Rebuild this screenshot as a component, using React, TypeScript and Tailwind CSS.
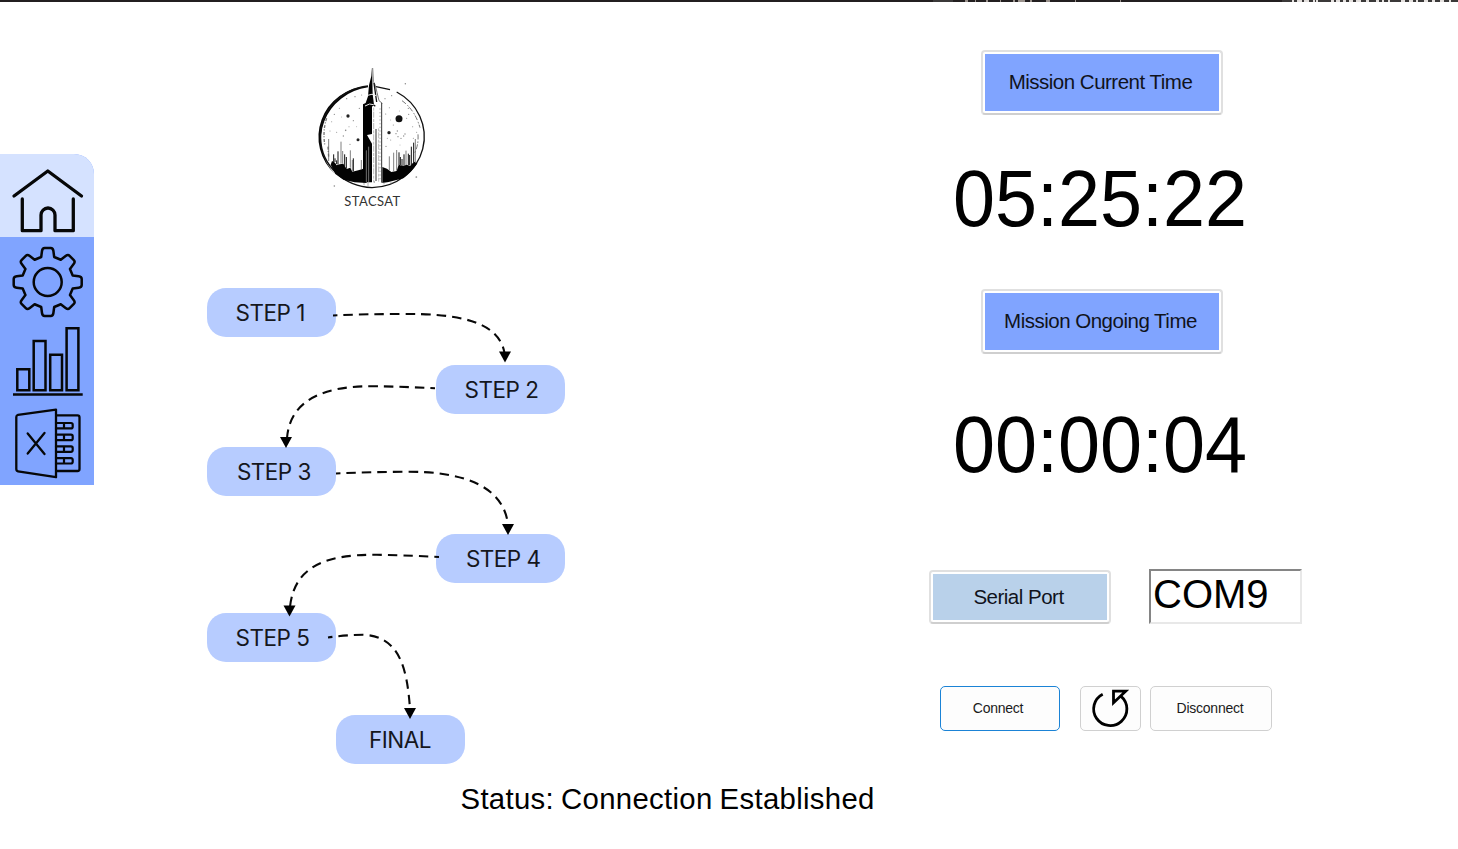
import type { ReactNode } from "react";

const toothPath = Array.from({ length: 8 }, (_, k) => {
  const a = (k * Math.PI) / 4;
  const p = (x: number, y: number) =>
    `${(47.7 + x * Math.cos(a) - y * Math.sin(a)).toFixed(2)} ${(45 + x * Math.sin(a) + y * Math.cos(a)).toFixed(2)}`;
  return `${k === 0 ? "M" : "L"}${p(-6.5, -25)} L${p(-5.7, -31)} Q${p(-5.3, -34)} ${p(-3, -34)} L${p(3, -34)} Q${p(5.3, -34)} ${p(5.7, -31)} L${p(6.5, -25)}`;
}).join(" ") + " Z";

function NavIcon({ children }: { children: ReactNode }) {
  return (
    <svg width="94" height="83" viewBox="0 0 94 83" fill="none" stroke="#060708" strokeWidth="2.5" strokeLinecap="round" strokeLinejoin="round" className="block">
      {children}
    </svg>
  );
}

function Sidebar() {
  return (
    <nav className="mt-[152px] flex h-[331px] w-[94px] shrink-0 flex-col overflow-hidden rounded-tr-[20px] bg-[#80a4ff]">
      <button aria-label="Home" className="h-[83px] shrink-0 bg-[#d5e2ff]">
        <NavIcon>
          <path strokeWidth="3.3" d="M14 42 L47.8 17 L81.5 42 M22.3 45 V76.7 H41 V61 a7 7 0 0 1 14 0 V76.7 H73.3 V45" />
        </NavIcon>
      </button>
      <button aria-label="Settings" className="h-[82px] shrink-0">
        <NavIcon>
          <path d={toothPath} />
          <circle cx="47.7" cy="45" r="14" />
        </NavIcon>
      </button>
      <button aria-label="Charts" className="h-[83px] shrink-0">
        <NavIcon>
          <path strokeLinecap="butt" strokeLinejoin="miter" d="M17.3 50.3h12v21h-12z M33.7 22h11.8v49.3h-11.8z M50.2 35.7h11.8v35.6h-11.8z M66.6 9.3h11.8v62h-11.8z M13 75.6h69.7" />
        </NavIcon>
      </button>
      <button aria-label="Spreadsheet" className="h-[83px] shrink-0">
        <NavIcon>
          <path strokeWidth="2.3" d="M56 7.6 L18 12.8 Q16.3 13.2 16.3 15 V67 Q16.3 69 18 69.3 L56 75.2 Z M56 13.4 H77.5 Q79.5 13.4 79.5 15.4 V67 Q79.5 69 77.5 69 H56 M27.7 31.4 L44.5 52 M44.5 31 L27.7 51.6" />
          <path strokeWidth="2.2" d="M56 21h15a1.7 1.7 0 0 1 1.7 1.7v2a1.7 1.7 0 0 1-1.7 1.7h-15 M64 21v5.4 M56 32.7h15a1.7 1.7 0 0 1 1.7 1.7v2a1.7 1.7 0 0 1-1.7 1.7h-15 M64 32.7v5.4 M56 44.4h15a1.7 1.7 0 0 1 1.7 1.7v2a1.7 1.7 0 0 1-1.7 1.7h-15 M64 44.4v5.4 M56 56.1h15a1.7 1.7 0 0 1 1.7 1.7v2a1.7 1.7 0 0 1-1.7 1.7h-15 M64 56.1v5.4" />
        </NavIcon>
      </button>
    </nav>
  );
}

const specks = [
  [140, 131, 2], [165, 125, 2], [178, 160, 2], [118, 160, 1.6], [103, 178, 2], [160, 197, 1.8], [137, 226, 2.4],
  [130, 243, 2], [147, 215, 1.5], [95, 200, 1.5], [110, 232, 1.6], [150, 268, 1.8], [255, 131, 1.8], [275, 122, 1.8],
  [268, 158, 1.6], [257, 177, 1.8], [280, 210, 1.8], [292, 228, 2], [288, 236, 2], [294, 245, 2], [303, 250, 2],
  [311, 243, 2], [315, 237, 2], [325, 160, 2], [320, 190, 1.6], [338, 215, 1.6], [272, 255, 1.5], [258, 274, 2],
  [262, 250, 1.5], [316, 86, 2.2], [326, 178, 2], [350, 232, 1.6], [103, 393, 2.4], [349, 366, 2.6], [185, 120, 1.6],
  [90, 228, 1.5], [125, 186, 1.4], [340, 250, 1.6], [300, 270, 1.4], [170, 215, 1.4], [272, 195, 1.4], [298, 168, 1.4],
];

function Logo() {
  return (
    <figure className="absolute left-[206px] top-[53px] w-[145px]">
      <svg width="145" height="137" viewBox="0 0 435 411" className="block">
        <path d="M204 93 A158 153 0 0 0 106 358 A165 157 0 0 1 204 97 Z" fill="#050505" />
        <path d="M204 93 A160 153 0 0 0 216 398 A160 153 0 0 0 290 111 M270 104 L228 95" fill="none" stroke="#111" strokeWidth="4" />
        <path d="M80 190 Q68 225 74 268 M84 275 L86 306" fill="none" stroke="#777" strokeWidth="4" strokeDasharray="9 4 3 5" />
        <path d="M306 137 Q345 165 360 218 M354 238 Q356 270 344 294" fill="none" stroke="#777" strokeWidth="3" strokeDasharray="15 6 5 4" />
        <path d="M92 329 L96 318 L105 323 L110 331 L119 328 L130 326 L136 336 L140 342 L151 338 L157 350 L175 346 L190 341 L190 378 L200 378 L200 384 L164 382 L130 374 L106 357 Z" fill="#030303" />
        <path d="M247 336 L261 341 L274 351 L290 348 L296 329 L309 333 L320 329 L330 333 L342 320 L352 325 Q335 352 310 370 L266 381 L247 384 Z" fill="#030303" />
        <path d="M101 321V298 M105 321V310 M110 327V316 M114 329V289 M134 334V298 M139 341V306 M160 349V310 M297 330V292 M301 330V306 M306 333V312 M312 332V298 M325 331V296 M329 331V300 M334 330V275 M341 323V263" stroke="#111" strokeWidth="3" />
        <path d="M86 318V252 M123 326V260 M128 326V288 M151 338V286 M157 349V315 M184 343V315 M268 346V304 M281 348V293 M290 347V285 M318 330V287 M346 321V252" stroke="#666" strokeWidth="2.5" />
        <path d="M189 382 V148 L197 144 L204 124 L207 91 L214 63 L216 37 L218 118 L222 149 L216 155 V237 L201 240 L216 266 V382 Z" fill="#020202" />
        <path d="M218 39 L220 79 L226 91 L231 112 L237 137 L247 145" fill="none" stroke="#777" strokeWidth="3" />
        <path d="M222 84 L230 141 M218 148 L226 154" stroke="#111" strokeWidth="4" />
        <path d="M203 121 Q216 114 229 122 M195 153 Q209 143 221 149" fill="none" stroke="#eee" strokeWidth="3" />
        <path d="M245 144 V383 M228 222 V378" stroke="#333" strokeWidth="3" />
        <path d="M221 158 V382 M236 220 V380" stroke="#999" strokeWidth="2" strokeDasharray="9 3 18 4" />
        <path d="M240 160 V374" stroke="#aaa" strokeWidth="3" strokeDasharray="4 7" />
        <path d="M199 382V286 M206 382V275" stroke="#aaa" strokeWidth="2" />
        <path d="M192 384V391 M204 382V394 M223 378V384 M252 382V388 M273 381V387" stroke="#888" strokeWidth="2" />
        {specks.map(([x, y, r], i) => <circle key={i} cx={x} cy={y} r={r} fill="#888" />)}
        <circle cx="144" cy="183" r="5" fill="#222" />
        <circle cx="174" cy="254" r="4.5" fill="#222" />
        <circle cx="267" cy="233" r="5" fill="#222" />
        <circle cx="297" cy="191" r="10.5" fill="#111" />
      </svg>
      <figcaption className="-mt-px text-center font-['Lato'] text-[13px] leading-5 tracking-[0.4px] text-[#333]">STACSAT</figcaption>
    </figure>
  );
}

const nodes = [
  { label: "STEP 1", place: "left-[112.5px] top-[285.5px] pl-[29px]" },
  { label: "STEP 2", place: "left-[341.5px] top-[362.5px] pl-[29px]" },
  { label: "STEP 3", place: "left-[113.4px] top-[445px] pl-[29.5px]" },
  { label: "STEP 4", place: "left-[342.4px] top-[532px] pl-[29.5px]" },
  { label: "STEP 5", place: "left-[112.5px] top-[611px] pl-[29px]" },
  { label: "FINAL", place: "left-[242.4px] top-[712.5px] pl-[32.5px]" },
];

const links = [
  { d: "M333 315.5 Q365 314 400 314 C460 313 499 322 504.5 353", x: 505, y: 362.5, offset: 5 },
  { d: "M435 388.3 Q400 386.5 377 386.3 C320 385 290 402 287 438", x: 286, y: 448, offset: 5 },
  { d: "M336 473.5 Q370 472 405 471.7 C465 471 504 487 508 525", x: 508, y: 535, offset: 5 },
  { d: "M439 557 Q400 555 377 554.8 C320 554 294 570 290 607", x: 289.5, y: 616.5, offset: 5 },
  { d: "M328 637.5 Q345 635 363 634.8 C398 636 407 665 410 709", x: 410, y: 719, offset: 5 },
];

function FlowDiagram() {
  return (
    <section className="relative w-[836px] shrink-0">
      <Logo />
      {nodes.map((n) => (
        <div key={n.label} className={`absolute flex h-[49px] w-[129px] items-center whitespace-nowrap rounded-[19px] bg-[#b7ccff] pt-px font-['Inter'] text-[22.5px] tracking-[-0.5px] text-[#15171d] ${n.place}`}>
          {n.label}
        </div>
      ))}
      <svg className="absolute left-0 top-0" width="600" height="780" viewBox="94 2 600 780">
        {links.map((l) => (
          <g key={l.d}>
            <path d={l.d} fill="none" stroke="#080808" strokeWidth="2.1" strokeDasharray="9.5 6" strokeDashoffset={l.offset} />
            <path d={`M${l.x - 6} ${l.y - 11} h12 l-6 11 z`} fill="#000" />
          </g>
        ))}
      </svg>
    </section>
  );
}

function Caption({ children, className }: { children: ReactNode; className: string }) {
  return (
    <div className={`flex items-center justify-center whitespace-nowrap rounded-[4px] border-2 border-b-[#cfcfcf] border-[#e0e0e0] p-[2px] text-[20.5px] tracking-[-0.5px] text-[#10131c] ${className}`}>
      {children}
    </div>
  );
}

function Clock({ value, className }: { value: string; className: string }) {
  return (
    <time className={`ml-[23px] h-[87px] w-max origin-left scale-x-[0.944] whitespace-nowrap text-[80px] leading-[87px] text-black ${className}`}>
      {value}
    </time>
  );
}

function Controls() {
  return (
    <section className="flex w-[400px] shrink-0 flex-col pt-[48px]">
      <Caption className="ml-[50.5px] h-[65px] w-[242px]">
        <span className="flex size-full items-center justify-center bg-[#80a4ff] pr-[2px]">Mission Current Time</span>
      </Caption>
      <Clock value="05:25:22" className="mt-[40px]" />
      <Caption className="ml-[50.5px] mt-[47px] h-[65px] w-[242px]">
        <span className="flex size-full items-center justify-center bg-[#80a4ff] pr-[2px]">Mission Ongoing Time</span>
      </Caption>
      <Clock value="00:00:04" className="mt-[47px]" />
      <div className="mt-[81px] flex items-start">
        <Caption className="-ml-px h-[54px] w-[182px] mt-px">
          <span className="flex size-full items-center justify-center bg-[#b9d1ea] pr-[3px]">Serial Port</span>
        </Caption>
        <div className="ml-[38px] h-[55px] w-[153px] border-2 border-b-[#e8e8e8] border-l-[#858585] border-r-[#e8e8e8] border-t-[#858585] pl-[2px] text-[40px] leading-[47px] text-black">COM9</div>
      </div>
      <div className="ml-[10px] mt-[62px] flex text-[14px] tracking-[-0.25px] text-[#1b1b1b]">
        <button className="h-[45px] w-[120px] rounded-[5px] border border-[#1b83d6] bg-[#fdfdfd] pr-[4px]">Connect</button>
        <button aria-label="Refresh" className="ml-5 h-[45px] w-[61px] rounded-[5px] border border-[#d0d0d0] bg-[#fdfdfd]">
          <svg width="59" height="43" viewBox="1081.7 687 59 43" fill="none" stroke="#000" strokeWidth="2.8">
            <path d="M1103.4 694.2 A16.6 16.6 0 1 0 1121.8 696.4 M1114.2 691.2 H1126.4 L1114.2 702.8 Z" />
          </svg>
        </button>
        <button className="ml-[9px] h-[45px] w-[122px] rounded-[5px] border border-[#d0d0d0] bg-[#fdfdfd] pr-[2px]">Disconnect</button>
      </div>
    </section>
  );
}

export default function App() {
  return (
    <main className="flex h-[849px] w-[1458px] flex-col overflow-hidden bg-white font-['Liberation_Sans',sans-serif]">
      <header className="h-[2px] shrink-0 bg-[#231f20]">
        <svg width="1458" height="2" viewBox="0 0 1458 2" className="block">
          <path d="M933 1h20M1282 1h176" stroke="#3b3939" strokeWidth="2" />
          <path d="M965 1h3M975 1h1M986 1h2M1000 1h1M1013 1h2M1018 1h7M1030 1h2M1046 1h4M1075 1h1M1120 1h1" stroke="#99918c" strokeWidth="2" />
          <path d="M1292 1h2M1297 1h5M1304 1h5M1313 1h2M1316 1h2M1331 1h3M1336 1h4M1343 1h3M1349 1h4M1356 1h5M1366 1h3M1376 1h3M1382 1h2M1388 1h2M1401 1h4M1409 1h4M1416 1h2M1424 1h4M1432 1h3M1440 1h4M1449 1h2" stroke="#e5e1df" strokeWidth="2" />
        </svg>
      </header>
      <div className="flex h-[778px] shrink-0">
        <Sidebar />
        <FlowDiagram />
        <Controls />
      </div>
      <footer className="pl-[460.5px] text-[29.33px] leading-[37px] tracking-[0.32px] text-black [word-spacing:-1.5px]">Status: Connection Established</footer>
    </main>
  );
}
